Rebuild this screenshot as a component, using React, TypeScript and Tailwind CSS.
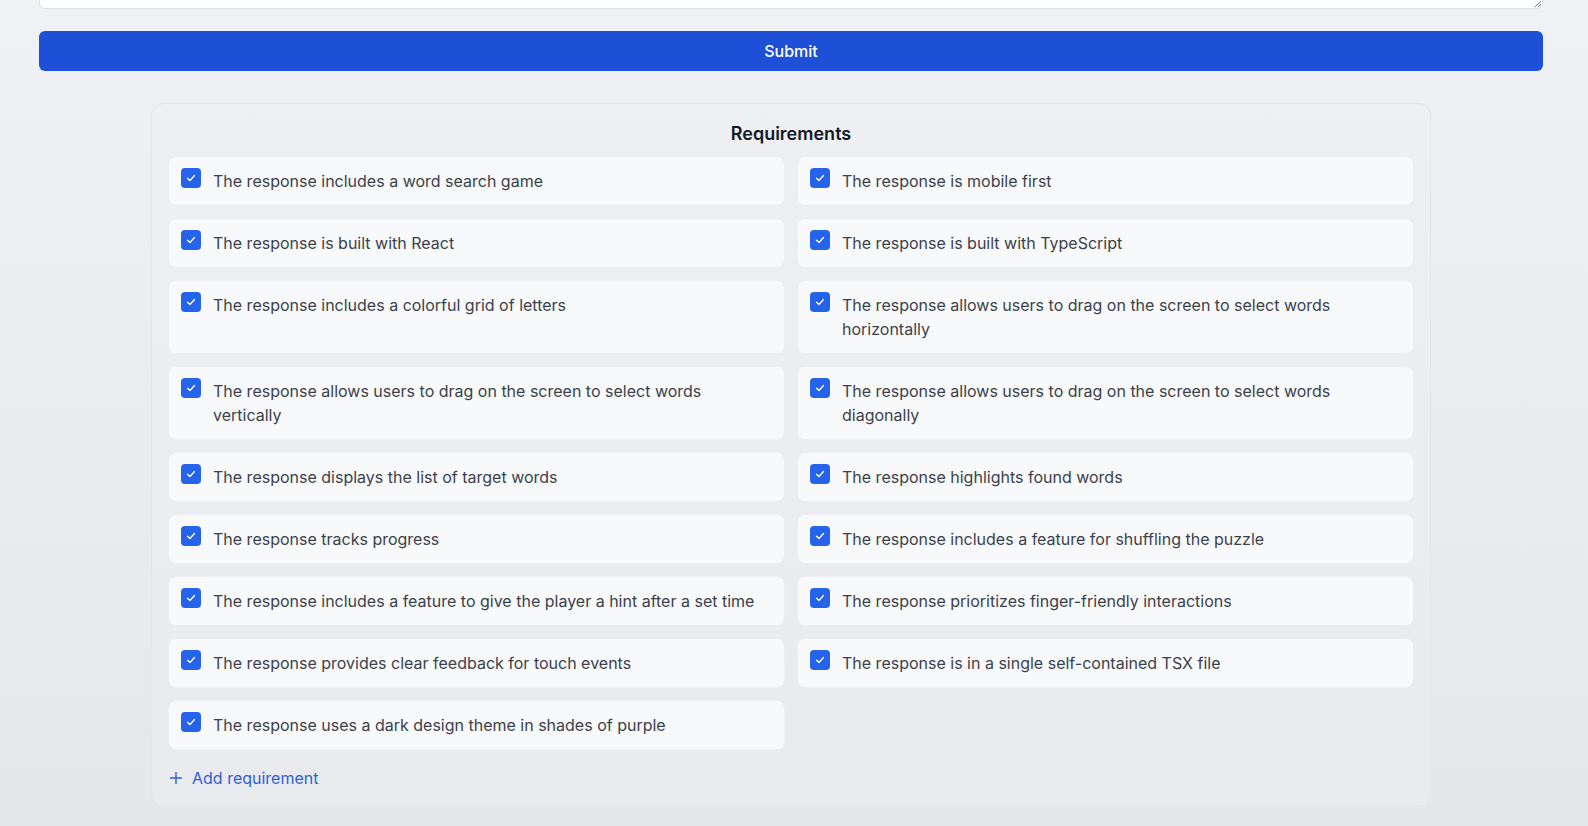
const requirements = [
  'The response includes a word search game',
  'The response is mobile first',
  'The response is built with React',
  'The response is built with TypeScript',
  'The response includes a colorful grid of letters',
  'The response allows users to drag on the screen to select words horizontally',
  'The response allows users to drag on the screen to select words vertically',
  'The response allows users to drag on the screen to select words diagonally',
  'The response displays the list of target words',
  'The response highlights found words',
  'The response tracks progress',
  'The response includes a feature for shuffling the puzzle',
  'The response includes a feature to give the player a hint after a set time',
  'The response prioritizes finger-friendly interactions',
  'The response provides clear feedback for touch events',
  'The response is in a single self-contained TSX file',
  'The response uses a dark design theme in shades of purple',
];

function CheckBox() {
  return (
    <span className="mt-[-1px] flex h-5 w-5 shrink-0 items-center justify-center rounded-[4px] bg-[#2563eb]">
      <svg width="12" height="12" viewBox="0 0 12 12" fill="none">
        <path d="M2.5 6.2 L5 8.5 L9.5 3.5" stroke="white" strokeWidth="1.3" strokeLinecap="round" strokeLinejoin="round" />
      </svg>
    </span>
  );
}

export default function App() {
  return (
    <main className="min-h-screen bg-gradient-to-b from-[#f0f1f4] to-[#e5e7eb] font-['Inter',sans-serif]">
      <div className="ml-[39px] w-[1504px]">
        <div className="relative h-[9px] rounded-b-md border border-t-0 border-[#dfe1e5] bg-white">
          <svg className="absolute bottom-[1px] right-[1px]" width="7" height="7" viewBox="0 0 7 7">
            <path d="M1 7 L7 1 M4 7 L7 4" stroke="#555" strokeWidth="0.8" />
          </svg>
        </div>
        <button className="mt-[22px] flex h-10 w-full items-center justify-center rounded-md bg-[#1d4fd7] text-base font-medium text-white">
          Submit
        </button>
        <section className="mx-auto mt-8 w-[1280px] rounded-xl border border-[#e3e5e9] bg-[#eef0f3]/40 p-4">
          <h2 className="mb-2 text-center text-lg font-semibold leading-7 text-[#111827]">Requirements</h2>
          <div className="grid grid-cols-2 gap-3">
            {requirements.map((r) => (
              <label key={r} className="flex items-start gap-3 rounded-lg border border-[#eceef1] bg-[#f8f9fb] px-3 py-3">
                <CheckBox />
                <span className="text-base leading-6 text-[#3b414b]">{r}</span>
              </label>
            ))}
          </div>
          <button className="mt-4 ml-0.5 flex items-center gap-2.5 text-base leading-6 text-[#2f5fd6]">
            <svg width="12" height="12" viewBox="0 0 12 12" fill="none">
              <path d="M6 0.5 V11.5 M0.5 6 H11.5" stroke="currentColor" strokeWidth="1.4" strokeLinecap="round" />
            </svg>
            Add requirement
          </button>
        </section>
      </div>
    </main>
  );
}
